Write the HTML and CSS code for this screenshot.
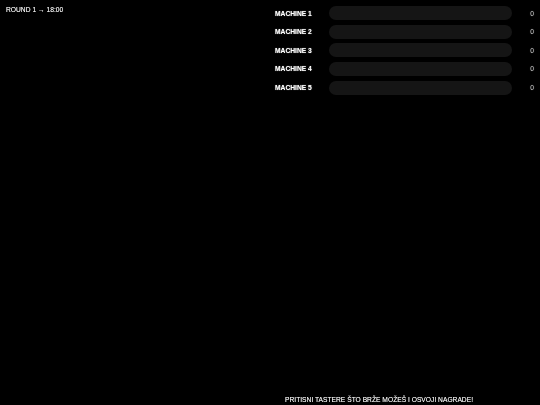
FILE: index.html
```html
<!DOCTYPE html>
<html>
<head>
<meta charset="utf-8">
<link rel="stylesheet" href="styles.css">
</head>
<body>
<div class="page">
  <div class="main">
    <div class="left">
      <div class="round">ROUND 1 → 18:00</div>
    </div>
    <div class="right">
      <div class="row"><span class="label">MACHINE 1</span><span class="bar"></span><span class="value">0</span></div>
      <div class="row"><span class="label">MACHINE 2</span><span class="bar"></span><span class="value">0</span></div>
      <div class="row"><span class="label">MACHINE 3</span><span class="bar"></span><span class="value">0</span></div>
      <div class="row"><span class="label">MACHINE 4</span><span class="bar"></span><span class="value">0</span></div>
      <div class="row"><span class="label">MACHINE 5</span><span class="bar"></span><span class="value">0</span></div>
    </div>
  </div>
  <div class="footer">PRITISNI TASTERE ŠTO BRŽE MOŽEŠ I OSVOJI NAGRADE!</div>
</div>
</body>
</html>
```
FILE: styles.css
```css
html, body {
  margin: 0;
  padding: 0;
  background: #000;
}
body {
  font-family: "Liberation Sans", Arial, sans-serif;
  color: #eee;
}
.page {
  height: 405px;
  display: flex;
  flex-direction: column;
  will-change: transform;
}
.main {
  flex: 1;
  display: grid;
  grid-template-columns: 270px 1fr;
}
.left {
  padding: 6px 6px;
}
.round {
  font-size: 6.7px;
  line-height: 8px;
  color: #f0f0f0;
  text-shadow: 0 0 0.6px rgba(255, 255, 255, 0.6);
}
.right {
  padding: 6px 0 0 5px;
  display: flex;
  flex-direction: column;
  gap: 4.67px;
}
.row {
  display: flex;
  align-items: center;
  height: 14px;
}
.label {
  width: 54px;
  flex: none;
  font-size: 6.7px;
  font-weight: bold;
  color: #fff;
  text-shadow: 0 0 1px rgba(255, 255, 255, 0.6);
}
.bar {
  flex: 1;
  height: 14px;
  border-radius: 7px;
  background: #151515;
}
.value {
  width: 22px;
  flex: none;
  text-align: right;
  padding-right: 6px;
  font-size: 6.7px;
  color: #bbb;
  text-shadow: 0 0 1px rgba(255, 255, 255, 0.4);
}
.footer {
  padding: 0 0 1px 285px;
  font-size: 6.7px;
  line-height: 8px;
  height: 8px;
  color: #f0f0f0;
  text-shadow: 0 0 0.6px rgba(255, 255, 255, 0.6);
}
```
